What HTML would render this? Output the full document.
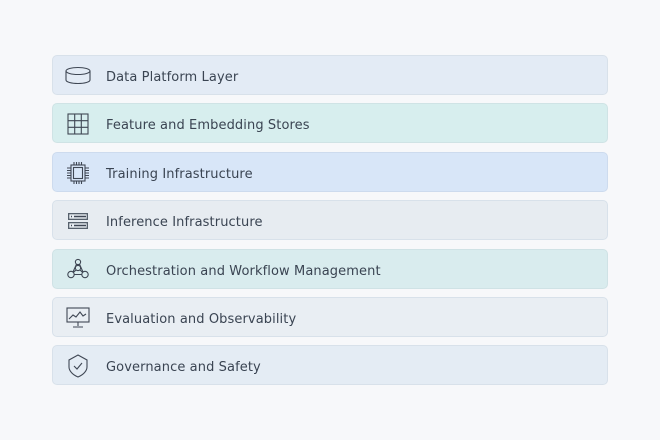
<!DOCTYPE html>
<html><head><meta charset="utf-8"><style>
html,body{margin:0;padding:0;width:660px;height:440px;background:#f7f8fa;overflow:hidden}
.r{position:absolute;left:52px;width:556px;height:40px;border:1px solid #d8e1ea;border-radius:5px;box-sizing:border-box}
.r svg{position:absolute;left:12px;top:8px;width:26px;height:24px}
.r span{position:absolute;left:53px;top:14px;font:13px "DejaVu Sans","Liberation Sans",sans-serif;color:#3a4452;letter-spacing:0.1px}
svg *{fill:none;stroke:#3f4754;stroke-width:1.1}
</style></head><body>
<div class="r" style="top:55px;background:#e3ebf5"><svg viewBox="0 0 26 24"><ellipse cx="13" cy="7" rx="12" ry="3.5"/><path d="M1 7v9c0 2 5.4 3.5 12 3.5s12-1.5 12-3.5V7"/></svg><span>Data Platform Layer</span></div>
<div class="r" style="top:103px;background:#d7eeee;border-color:#cfe3e5"><svg viewBox="0 0 26 24"><rect x="3" y="2" width="20" height="20"/><path d="M9.7 2v20M16.3 2v20M3 8.7h20M3 15.3h20"/></svg><span>Feature and Embedding Stores</span></div>
<div class="r" style="top:152px;background:#d8e6f8;border-color:#cddbee"><svg viewBox="0 0 26 24"><rect x="6" y="4" width="14" height="16"/><rect x="8.5" y="6.5" width="9" height="11"/><path d="M9 1v3M11.5 1v3M14 1v3M16.5 1v3M9 20v3M11.5 20v3M14 20v3M16.5 20v3M2 7h4M2 9.5h4M2 12h4M2 14.5h4M2 17h4M20 7h4M20 9.5h4M20 12h4M20 14.5h4M20 17h4"/></svg><span>Training Infrastructure</span></div>
<div class="r" style="top:200px;background:#e7ecf1"><svg viewBox="0 0 26 24"><rect x="3" y="4" width="20" height="7" style="fill:#56606c;stroke:none"/><rect x="3" y="13" width="20" height="7" style="fill:#56606c;stroke:none"/><rect x="4.3" y="5.3" width="17.4" height="4.4" style="fill:#e7ecf1;stroke:none"/><rect x="4.3" y="14.3" width="17.4" height="4.4" style="fill:#e7ecf1;stroke:none"/><path d="M6 7.5h1M6 16.5h1M9 7.5h12M9 16.5h12" style="stroke-width:1.4"/></svg><span>Inference Infrastructure</span></div>
<div class="r" style="top:249px;background:#d9ecee;border-color:#cfe2e5"><svg viewBox="0 0 26 24"><circle cx="13" cy="4" r="2.6"/><circle cx="13" cy="10" r="2.6"/><circle cx="6" cy="16.5" r="3.2"/><circle cx="20" cy="16.5" r="3.2"/><path d="M13 6.6v.8M11 12l-2.6 2.4M15 12l2.6 2.4M9.2 16.5h7.6M11.6 6l-3.6 8M14.4 6l3.6 8"/></svg><span>Orchestration and Workflow Management</span></div>
<div class="r" style="top:297px;background:#e9eef3"><svg viewBox="0 0 26 24"><rect x="2" y="2" width="22" height="14"/><path d="M4 13l4-4 3 2 4-5 3 4 3-2M13 16v4M8 21h10"/></svg><span>Evaluation and Observability</span></div>
<div class="r" style="top:345px;background:#e4ecf4"><svg viewBox="0 0 26 24"><path d="M13 1l9 5v7c0 4-4 8-9 10-5-2-9-6-9-10V6z"/><path d="M9 12l3 3 5-6"/></svg><span>Governance and Safety</span></div>
</body></html>
